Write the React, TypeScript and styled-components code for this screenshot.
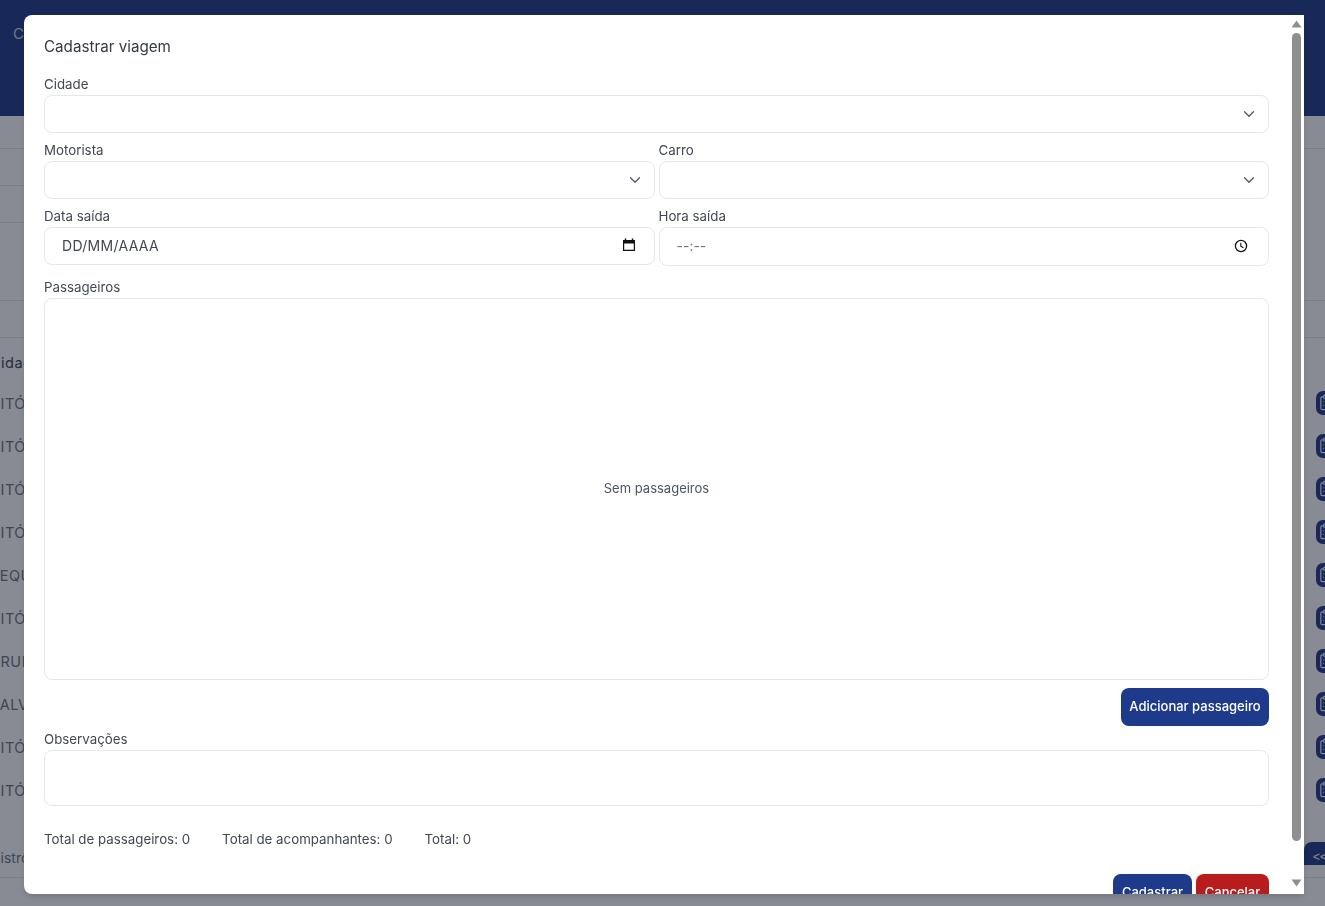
import React from "react";
import styled, { createGlobalStyle } from "styled-components";
import { ChevronDown, ClipboardList } from "lucide-react";

const Global = createGlobalStyle`
  html, body { margin: 0; height: 100%; overflow: hidden; background: #fff; }
  body { font-family: Inter, "Liberation Sans", sans-serif; color: #374151; }
  * { box-sizing: border-box; }
`;

const Page = styled.div`
  width: 1325px;
  height: 906px;
  overflow: hidden;
  background: #fff;
`;
const Header = styled.header`
  height: 116px;
  background: #1e3a8a;
  color: #d1d5db;
  font-size: 15px;
  padding: 24px 13px;
`;
const Band = styled.div<{ $h: number; $short?: boolean }>`
  height: ${(p) => p.$h}px;
  width: ${(p) => (p.$short ? "1000px" : "auto")};
  border-bottom: 1px solid #e5e7eb;
`;
const Row = styled.div<{ $head?: boolean }>`
  height: 43px;
  padding-top: ${(p) => (p.$head ? 5 : 1)}px;
  display: flex;
  align-items: center;
  justify-content: space-between;
  overflow: hidden;
  font-size: 14.5px;
  letter-spacing: 0.5px;
  color: ${(p) => (p.$head ? "#374151" : "#6b7280")};
`;
const Cell = styled.span`
  margin-left: -10px;
  white-space: nowrap;
`;
const RowBtn = styled.button`
  width: 34px;
  height: 24px;
  margin-top: -1px;
  margin-right: -25px;
  flex: none;
  display: flex;
  align-items: center;
  padding: 0 0 0 2px;
  border: 0;
  border-radius: 7px;
  background: #1e3a8a;
  color: #fff;
`;
const Footer = styled.div`
  margin-top: 31px;
  height: 36px;
  display: flex;
  justify-content: space-between;
  align-items: flex-start;
  border-bottom: 1px solid #e5e7eb;
  font-size: 14px;
  color: #6b7280;
`;
const FooterText = styled.span`
  margin: 7px 0 0 -25px;
`;
const PageBtn = styled.button`
  width: 40px;
  height: 23px;
  margin-right: -19px;
  padding: 6px 0 0 9px;
  border: 0;
  border-radius: 8px 0 0 0;
  background: #1e3a8a;
  color: #fff;
  font-size: 12px;
  text-align: left;
`;

const Overlay = styled.div`
  position: fixed;
  inset: 0;
  background: rgba(17, 24, 39, 0.5);
`;
const Modal = styled.div`
  position: absolute;
  left: 24px;
  top: 15px;
  width: 1280px;
  height: 879px;
  display: flex;
  background: #fff;
  border-radius: 8px 0 0 8px;
  box-shadow: 0 4px 6px -1px rgba(0, 0, 0, 0.1), 0 2px 4px -2px rgba(0, 0, 0, 0.1);
  overflow: hidden;
`;
const ModalBody = styled.div`
  flex: 1;
  min-width: 0;
  height: 879px;
  overflow: hidden;
  padding: 20px;
`;
const ScrollTrack = styled.div`
  flex: none;
  width: 15px;
  display: flex;
  flex-direction: column;
  align-items: flex-start;
  padding-left: 2px;
  color: #8f8f8f;
`;
const ScrollUp = styled.div`
  height: 18px;
  padding-top: 5px;
  line-height: 0;
`;
const ScrollThumb = styled.div`
  width: 9px;
  height: 808px;
  margin-left: 1px;
  border-radius: 5px;
  background: #8f8f8f;
`;
const ScrollDown = styled.div`
  margin-top: auto;
  height: 15px;
  line-height: 0;
`;
const Title = styled.h2`
  margin: 0 0 15px;
  height: 23px;
  font-size: 15.2px;
  line-height: 23px;
  font-weight: 400;
  color: #343b47;
`;
const Columns = styled.div<{ $mb?: number }>`
  display: grid;
  grid-template-columns: 1fr 1fr;
  column-gap: 4px;
  margin-bottom: ${(p) => p.$mb ?? 0}px;
`;
const Field = styled.div`
  margin-bottom: 6px;
  min-width: 0;
`;
const Label = styled.label`
  display: block;
  height: 22px;
  font-size: 13.3px;
  line-height: 22px;
  color: #414854;
`;
const Control = styled.div<{ $h?: number; $pr?: number; $pb?: number }>`
  height: ${(p) => p.$h ?? 38}px;
  display: flex;
  align-items: center;
  justify-content: space-between;
  padding: 0 ${(p) => p.$pr ?? 10}px ${(p) => p.$pb ?? 1}px 17px;
  border: 1px solid #e5e7eb;
  border-radius: 8px;
  background: #fff;
  font-size: 14px;
  color: #1f2937;
`;
const Muted = styled.span`
  color: #6b7280;
`;
const Dark = styled.span`
  letter-spacing: 0.3px;
  color: #414854;
`;
const PassengerBox = styled.div`
  height: 382px;
  padding-bottom: 2px;
  display: flex;
  align-items: center;
  justify-content: center;
  border: 1px solid #e5e7eb;
  border-radius: 8px;
  font-size: 13px;
  color: #4b5563;
`;
const Actions = styled.div<{ $mt?: number; $mb?: number }>`
  display: flex;
  justify-content: flex-end;
  gap: 4px;
  margin-top: ${(p) => p.$mt ?? 0}px;
  margin-bottom: ${(p) => p.$mb ?? 0}px;
`;
const Button = styled.button<{ $danger?: boolean; $w: number }>`
  width: ${(p) => p.$w}px;
  height: 38px;
  padding: 0 0 2px;
  border: 0;
  border-radius: 8px;
  background: ${(p) => (p.$danger ? "#b91c1c" : "#1e3a8a")};
  color: #fff;
  font-family: inherit;
  font-size: 13px;
  font-weight: 500;
`;
const Area = styled.div`
  height: 56px;
  border: 1px solid #e5e7eb;
  border-radius: 8px;
`;
const Totals = styled.div`
  display: flex;
  gap: 32px;
  margin-top: 22px;
  height: 22px;
  font-size: 13.3px;
  line-height: 22px;
  color: #414854;
`;

const cities = ["VITÓRIA", "VITÓRIA", "VITÓRIA", "VITÓRIA", "SEQUEIRA", "VITÓRIA", "ARUNA", "SALVADOR", "VITÓRIA", "VITÓRIA"];

const CalendarGlyph = () => (
  <svg width="14" height="14" viewBox="0 0 14 14" fill="none">
    <path d="M3.5 0.5V2M10.5 0.5V2" stroke="#111" strokeWidth="1.5" />
    <path d="M1 2h12v11H1z M2.2 5.4v6.4h9.6V5.4z" fill="#111" fillRule="evenodd" />
  </svg>
);
const ClockGlyph = () => (
  <svg width="14" height="14" viewBox="0 0 14 14" fill="none" stroke="#111">
    <circle cx="7" cy="7" r="5.6" strokeWidth="1.3" />
    <path d="M6.8 3.8V7.3L9.4 8.8" strokeWidth="1.1" />
  </svg>
);
const Chevron = () => <ChevronDown size={18} color="#4b5563" strokeWidth={1.6} />;
const Arrow = ({ down }: { down?: boolean }) => (
  <svg width="11" height="8" viewBox="0 0 11 8" fill="currentColor">
    <path d={down ? "M5.5 7.5L10.5 .5H.5Z" : "M5.5 .5L10.5 7.5H.5Z"} />
  </svg>
);

export default function App() {
  return (
    <Page>
      <Global />
      <Header>Cadastro</Header>
      <Band $h={33} />
      <Band $h={37} $short />
      <Band $h={37} $short />
      <Band $h={78} />
      <Band $h={37} />
      <Row $head>
        <Cell>Cidade</Cell>
      </Row>
      {cities.map((c, i) => (
        <Row key={i}>
          <Cell>{c}</Cell>
          <RowBtn aria-label="Detalhes">
            <ClipboardList size={17} strokeWidth={1.6} />
          </RowBtn>
        </Row>
      ))}
      <Footer>
        <FooterText>Registros</FooterText>
        <PageBtn>&lt;&lt;</PageBtn>
      </Footer>
      <Overlay>
        <Modal>
          <ModalBody>
            <Title>Cadastrar viagem</Title>
            <Field>
              <Label>Cidade</Label>
              <Control>
                <span />
                <Chevron />
              </Control>
            </Field>
            <Columns>
              <Field>
                <Label>Motorista</Label>
                <Control>
                  <span />
                  <Chevron />
                </Control>
              </Field>
              <Field>
                <Label>Carro</Label>
                <Control>
                  <span />
                  <Chevron />
                </Control>
              </Field>
            </Columns>
            <Columns $mb={4}>
              <Field>
                <Label>Data saída</Label>
                <Control $pr={18} $pb={2}>
                  <Dark>DD/MM/AAAA</Dark>
                  <CalendarGlyph />
                </Control>
              </Field>
              <Field>
                <Label>Hora saída</Label>
                <Control $h={39} $pr={20} $pb={2}>
                  <Muted>--:--</Muted>
                  <ClockGlyph />
                </Control>
              </Field>
            </Columns>
            <Field>
              <Label>Passageiros</Label>
              <PassengerBox>Sem passageiros</PassengerBox>
            </Field>
            <Actions $mt={8} $mb={2}>
              <Button $w={148}>Adicionar passageiro</Button>
            </Actions>
            <Field>
              <Label>Observações</Label>
              <Area />
            </Field>
            <Totals>
              <span>Total de passageiros: 0</span>
              <span>Total de acompanhantes: 0</span>
              <span>Total: 0</span>
            </Totals>
            <Actions $mt={24}>
              <Button $w={79}>Cadastrar</Button>
              <Button $w={73} $danger>Cancelar</Button>
            </Actions>
          </ModalBody>
          <ScrollTrack>
            <ScrollUp><Arrow /></ScrollUp>
            <ScrollThumb />
            <ScrollDown><Arrow down /></ScrollDown>
          </ScrollTrack>
        </Modal>
      </Overlay>
    </Page>
  );
}
